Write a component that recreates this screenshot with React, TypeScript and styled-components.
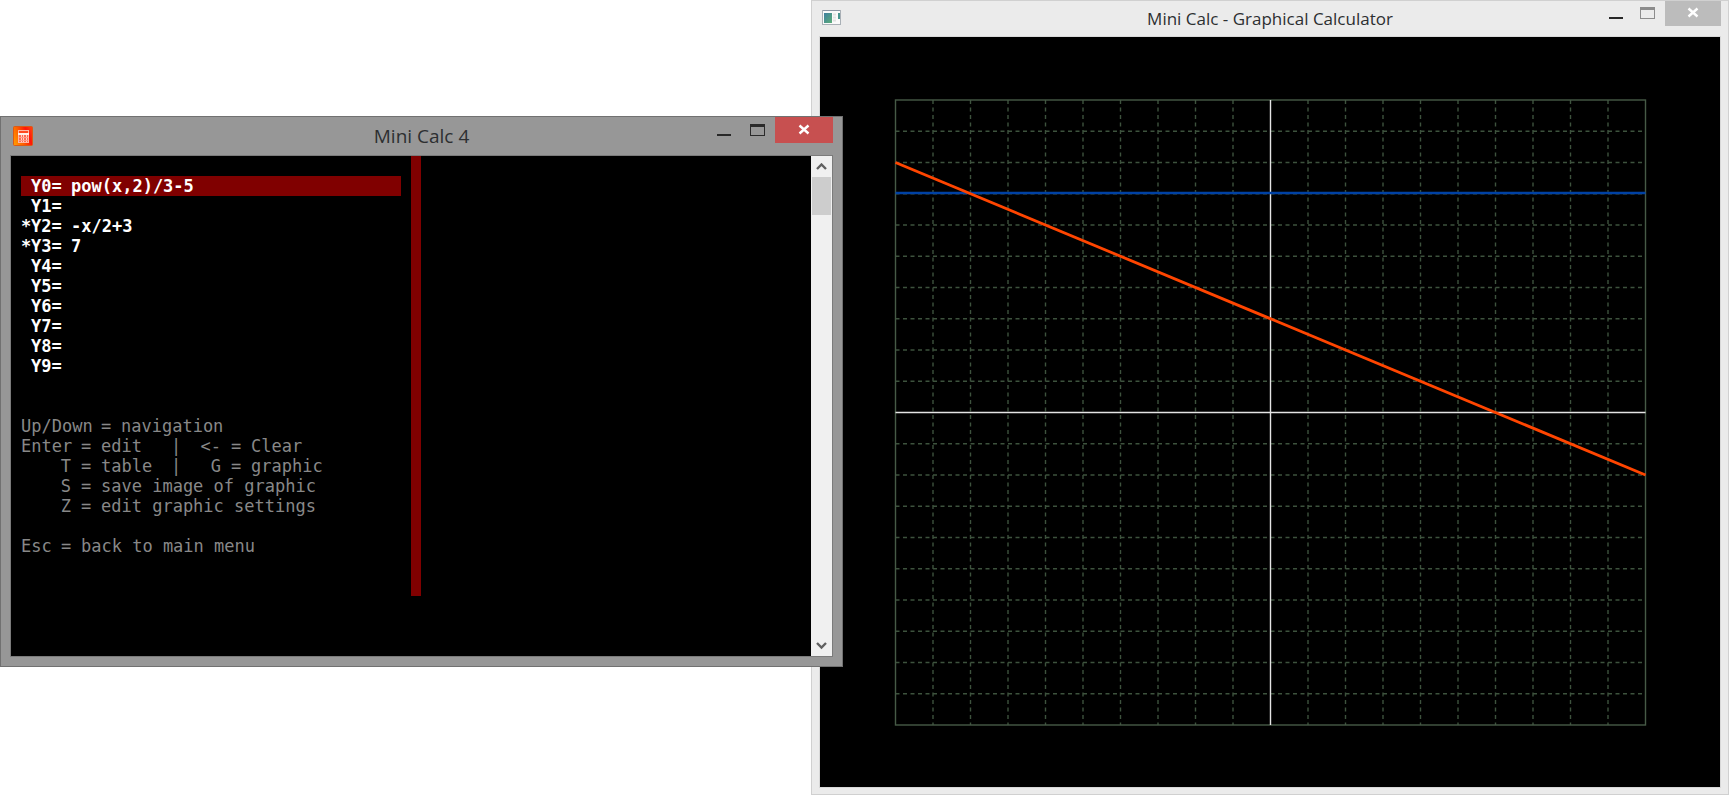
import React from "react";
import styled, { createGlobalStyle, css } from "styled-components";

const GlobalStyle = createGlobalStyle`
  *, *::before, *::after { box-sizing: border-box; }
  body {
    margin: 0;
    background: #ffffff;
    font-family: "Open Sans", "Noto Sans", sans-serif;
  }
`;

type Tone = "active" | "idle";

const Desktop = styled.main`
  display: grid;
  grid-template-columns: minmax(600px, 843fr) minmax(400px, 886fr);
  min-height: 100vh;
`;

const AppWindow = styled.section<{ $tone: Tone }>`
  display: flex;
  flex-direction: column;
  ${({ $tone }) =>
    $tone === "active"
      ? css`
          z-index: 1;
          align-self: start;
          margin-top: 116px;
          padding: 0 9px 9px;
          background: #979797;
          border: 1px solid #717171;
        `
      : css`
          margin-left: -32px;
          padding: 0 7px 6px;
          background: #ebebeb;
          border: 1px solid #d0d0d0;
        `}
`;

const TitleBar = styled.header<{ $tone: Tone }>`
  display: grid;
  grid-template-columns: 1fr auto 1fr;
  height: ${({ $tone }) => ($tone === "active" ? 38 : 35)}px;
`;

const IconSlot = styled.span<{ $tone: Tone }>`
  display: flex;
  align-items: center;
  padding: ${({ $tone }) => ($tone === "active" ? "0 0 0 3px" : "0 0 2px 3px")};
`;

const Title = styled.h1<{ $tone: Tone }>`
  align-self: center;
  margin: 0;
  color: #2d2f31;
  font-size: ${({ $tone }) => ($tone === "active" ? 19 : 17)}px;
  font-weight: 400;
  line-height: 24px;
  white-space: nowrap;
`;

const Controls = styled.div`
  display: flex;
  justify-content: flex-end;
  align-items: flex-start;
`;

const ControlButton = styled.button<{ $tone: Tone; $width: number; $fill?: string }>`
  display: flex;
  align-items: flex-end;
  justify-content: center;
  width: ${({ $width }) => $width}px;
  height: ${({ $tone }) => ($tone === "active" ? 26 : 25)}px;
  padding: 0;
  border: 0;
  background: ${({ $fill }) => $fill ?? "transparent"};

  svg {
    flex: none;
  }
`;

const Console = styled.div`
  display: flex;
  min-height: 502px;
  border: 1px solid #7b7b7b;
  background: #000000;
  font-family: "DejaVu Sans Mono", "Liberation Mono", monospace;
  font-size: 17px;
  line-height: 20px;
  white-space: pre;
`;

const Pane = styled.div`
  flex: 0 0 400px;
  padding: 20px 10px 0;
`;

const Equations = styled.ol`
  margin: 0 0 40px;
  padding: 0;
  list-style: none;
`;

const Equation = styled.li<{ $selected?: boolean }>`
  display: grid;
  grid-template-columns: 10px 40px 1fr;
  height: 20px;
  color: #ffffff;
  font-weight: 700;
  background: ${({ $selected }) => ($selected ? "#800000" : "transparent")};
`;

const Help = styled.div`
  color: #888888;
`;

const HelpRow = styled.p<{ $columns: string; $spaced?: boolean }>`
  display: grid;
  grid-template-columns: ${({ $columns }) => $columns};
  height: 20px;
  margin: ${({ $spaced }) => ($spaced ? 20 : 0)}px 0 0;
`;

const Key = styled.kbd`
  padding-right: 10px;
  font: inherit;
  text-align: right;
`;

const Divider = styled.div`
  flex: none;
  align-self: flex-start;
  width: 10px;
  height: 440px;
  background: #800000;
`;

const OutputPane = styled.div`
  flex: 1;
`;

const ScrollBar = styled.div`
  display: flex;
  flex-direction: column;
  flex: none;
  width: 21px;
  background: #f0f0f0;
`;

const ScrollButton = styled.button`
  display: flex;
  align-items: center;
  justify-content: center;
  height: 21px;
  padding: 0;
  border: 0;
  background: transparent;
`;

const ScrollTrack = styled.div`
  flex: 1;
  padding: 0 1px;
`;

const ScrollThumb = styled.div`
  height: 38px;
  background: #cdcdcd;
`;

const PlotArea = styled.div`
  display: flex;
  flex: 1;
  min-height: 0;
  border: 1px solid #d8d8d8;
  background: #000000;
`;

const Plot = styled.svg`
  display: block;
  width: 100%;
`;

const MinimizeGlyph = () => (
  <svg width="14" height="26" viewBox="0 0 14 26" shapeRendering="crispEdges" aria-hidden="true">
    <rect y="17" width="14" height="2" fill="#282828" />
  </svg>
);

const MaximizeGlyph = ({ color }: { color: string }) => (
  <svg width="15" height="26" viewBox="0 0 15 26" shapeRendering="crispEdges" aria-hidden="true">
    <path d="M0 7h15v12H0zM1 10v8h13V10z" fillRule="evenodd" fill={color} />
  </svg>
);

const CloseGlyph = () => (
  <svg width="12" height="26" viewBox="0 0 12 26" aria-hidden="true">
    <path d="M1.5 8.5l9 8M10.5 8.5l-9 8" stroke="#ffffff" strokeWidth="2.4" />
  </svg>
);

const Chevron = ({ down }: { down?: boolean }) => (
  <svg width="11" height="8" viewBox="0 0 11 8" aria-hidden="true">
    <path
      d={down ? "M1 1l4.500 4.500 4.500-4.500" : "M1 6l4.500-4.500 4.500 4.500"}
      fill="none"
      stroke="#606060"
      strokeWidth="2.4"
    />
  </svg>
);

const CalculatorIcon = () => (
  <svg width="20" height="20" viewBox="0 0 20 20" aria-hidden="true">
    <defs>
      <linearGradient id="calc-fill" x1="0" y1="0.7" x2="1" y2="0.3">
        <stop offset="0" stopColor="#ff9500" />
        <stop offset="0.4" stopColor="#ff5a00" />
        <stop offset="0.75" stopColor="#ff1408" />
        <stop offset="1" stopColor="#ff3a10" />
      </linearGradient>
    </defs>
    <rect x="0.500" y="0.500" width="19" height="19" rx="1" fill="url(#calc-fill)" stroke="#dc5a14" />
    <rect x="5.500" y="4.500" width="10" height="12" fill="#ff6a50" stroke="#ffb8a4" />
    <rect x="6" y="5" width="9" height="2" fill="#ff4a20" />
    <rect x="5" y="7" width="11" height="2" fill="#fff0e8" />
    <path d="M8.500 9v7M10.500 9v7M13.500 9v7" stroke="#ffd0c4" />
    <path d="M6 11.500h9M6 14.500h9" stroke="#ff9c88" />
  </svg>
);

const ProgramIcon = () => (
  <svg width="19" height="16" viewBox="0 0 19 16" aria-hidden="true">
    <defs>
      <linearGradient id="program-fill" x1="0" y1="0" x2="1" y2="1">
        <stop offset="0" stopColor="#3f7fa0" />
        <stop offset="1" stopColor="#5cae78" />
      </linearGradient>
    </defs>
    <rect x="0.500" y="0.500" width="18" height="14" fill="#fafafa" stroke="#a9b0b6" />
    <path d="M1 0.500h17" stroke="#8d97a5" />
    <rect x="2" y="3" width="8" height="10" fill="url(#program-fill)" />
    <path d="M11 4.500h3M11 7.500h3M11 10.500h3" stroke="#e2e2e2" strokeWidth="2" />
    <rect x="16" y="3" width="2" height="6" fill="#4a9690" />
  </svg>
);

const WindowControls = ({ tone }: { tone: Tone }) => (
  <Controls>
    <ControlButton $tone={tone} $width={tone === "active" ? 30 : 26} aria-label="Minimize">
      <MinimizeGlyph />
    </ControlButton>
    <ControlButton $tone={tone} $width={36} aria-label="Maximize">
      <MaximizeGlyph color={tone === "active" ? "#2a2a2a" : "#8c8c8c"} />
    </ControlButton>
    <ControlButton
      $tone={tone}
      $width={tone === "active" ? 58 : 56}
      $fill={tone === "active" ? "#c75050" : "#bcbcbc"}
      aria-label="Close"
    >
      <CloseGlyph />
    </ControlButton>
  </Controls>
);

const equations = [
  { name: "Y0=", body: "pow(x,2)/3-5", selected: true },
  { name: "Y1=", body: "" },
  { name: "Y2=", body: "-x/2+3", plotted: true },
  { name: "Y3=", body: "7", plotted: true },
  { name: "Y4=", body: "" },
  { name: "Y5=", body: "" },
  { name: "Y6=", body: "" },
  { name: "Y7=", body: "" },
  { name: "Y8=", body: "" },
  { name: "Y9=", body: "" },
];

const WIDE = "80px 20px 1fr";
const SINGLE = "60px 20px 1fr";
const SPLIT = "60px 20px 70px 20px 40px 20px 1fr";
const SHORT = "40px 20px 1fr";

const help = [
  { columns: WIDE, cells: ["Up/Down", "=", "navigation"] },
  { columns: SPLIT, cells: ["Enter", "=", "edit", "|", "<-", "=", "Clear"] },
  { columns: SPLIT, cells: ["T", "=", "table", "|", "G", "=", "graphic"] },
  { columns: SINGLE, cells: ["S", "=", "save image of graphic"] },
  { columns: SINGLE, cells: ["Z", "=", "edit graphic settings"] },
  { columns: SHORT, cells: ["Esc", "=", "back to main menu"], spaced: true },
];

/* Plot geometry: a 20 by 20 unit grid centred in a 900 by 750 canvas. */
const LEFT = 75.5;
const RIGHT = 825.5;
const TOP = 63;
const BOTTOM = 688;
const STEP_X = (RIGHT - LEFT) / 20;
const STEP_Y = (BOTTOM - TOP) / 20;
const plotX = (x: number) => LEFT + (x + 10) * STEP_X;
const plotY = (y: number) => TOP + (10 - y) * STEP_Y;
const ticks = Array.from({ length: 19 }, (_, i) => i - 9).filter((t) => t !== 0);

const GraphPlot = () => (
  <Plot viewBox="0 0 900 750" role="img" aria-label="Graph of Y2 and Y3">
    <g stroke="#3d523d" strokeWidth="1.4" strokeDasharray="4 3.500">
      {ticks.map((t) => (
        <line key={`v${t}`} x1={plotX(t)} x2={plotX(t)} y1={TOP} y2={BOTTOM} />
      ))}
      {ticks.map((t) => (
        <line key={`h${t}`} x1={LEFT} x2={RIGHT} y1={plotY(t)} y2={plotY(t)} />
      ))}
    </g>
    <rect x={LEFT} y={TOP} width={RIGHT - LEFT} height={BOTTOM - TOP} fill="none" stroke="#465a46" strokeWidth="1.4" />
    <g stroke="#e4e4e4" strokeWidth="1.4">
      <line x1={LEFT} x2={RIGHT} y1={plotY(0)} y2={plotY(0)} />
      <line x1={plotX(0)} x2={plotX(0)} y1={TOP} y2={BOTTOM} />
    </g>
    <line x1={LEFT} x2={RIGHT} y1={156} y2={156} stroke="#0041a4" strokeWidth="2.6" />
    <line x1={plotX(-10)} y1={plotY(8)} x2={plotX(10)} y2={plotY(-2)} stroke="#ff4500" strokeWidth="2.8" />
  </Plot>
);

export default function App() {
  return (
    <>
      <GlobalStyle />
      <Desktop>
        <AppWindow $tone="active">
          <TitleBar $tone="active">
            <IconSlot $tone="active">
              <CalculatorIcon />
            </IconSlot>
            <Title $tone="active">Mini Calc 4</Title>
            <WindowControls tone="active" />
          </TitleBar>
          <Console>
            <Pane>
              <Equations>
                {equations.map((eq) => (
                  <Equation key={eq.name} $selected={eq.selected}>
                    <span>{eq.plotted ? "*" : ""}</span>
                    <span>{eq.name}</span>
                    <span>{eq.body}</span>
                  </Equation>
                ))}
              </Equations>
              <Help>
                {help.map((row) => (
                  <HelpRow key={row.cells[0]} $columns={row.columns} $spaced={row.spaced}>
                    {row.cells.map((cell, i) =>
                      i === 0 || i === 4 ? <Key key={i}>{cell}</Key> : <span key={i}>{cell}</span>
                    )}
                  </HelpRow>
                ))}
              </Help>
            </Pane>
            <Divider />
            <OutputPane />
            <ScrollBar>
              <ScrollButton aria-label="Scroll up">
                <Chevron />
              </ScrollButton>
              <ScrollTrack>
                <ScrollThumb />
              </ScrollTrack>
              <ScrollButton aria-label="Scroll down">
                <Chevron down />
              </ScrollButton>
            </ScrollBar>
          </Console>
        </AppWindow>
        <AppWindow $tone="idle">
          <TitleBar $tone="idle">
            <IconSlot $tone="idle">
              <ProgramIcon />
            </IconSlot>
            <Title $tone="idle">Mini Calc - Graphical Calculator</Title>
            <WindowControls tone="idle" />
          </TitleBar>
          <PlotArea>
            <GraphPlot />
          </PlotArea>
        </AppWindow>
      </Desktop>
    </>
  );
}
